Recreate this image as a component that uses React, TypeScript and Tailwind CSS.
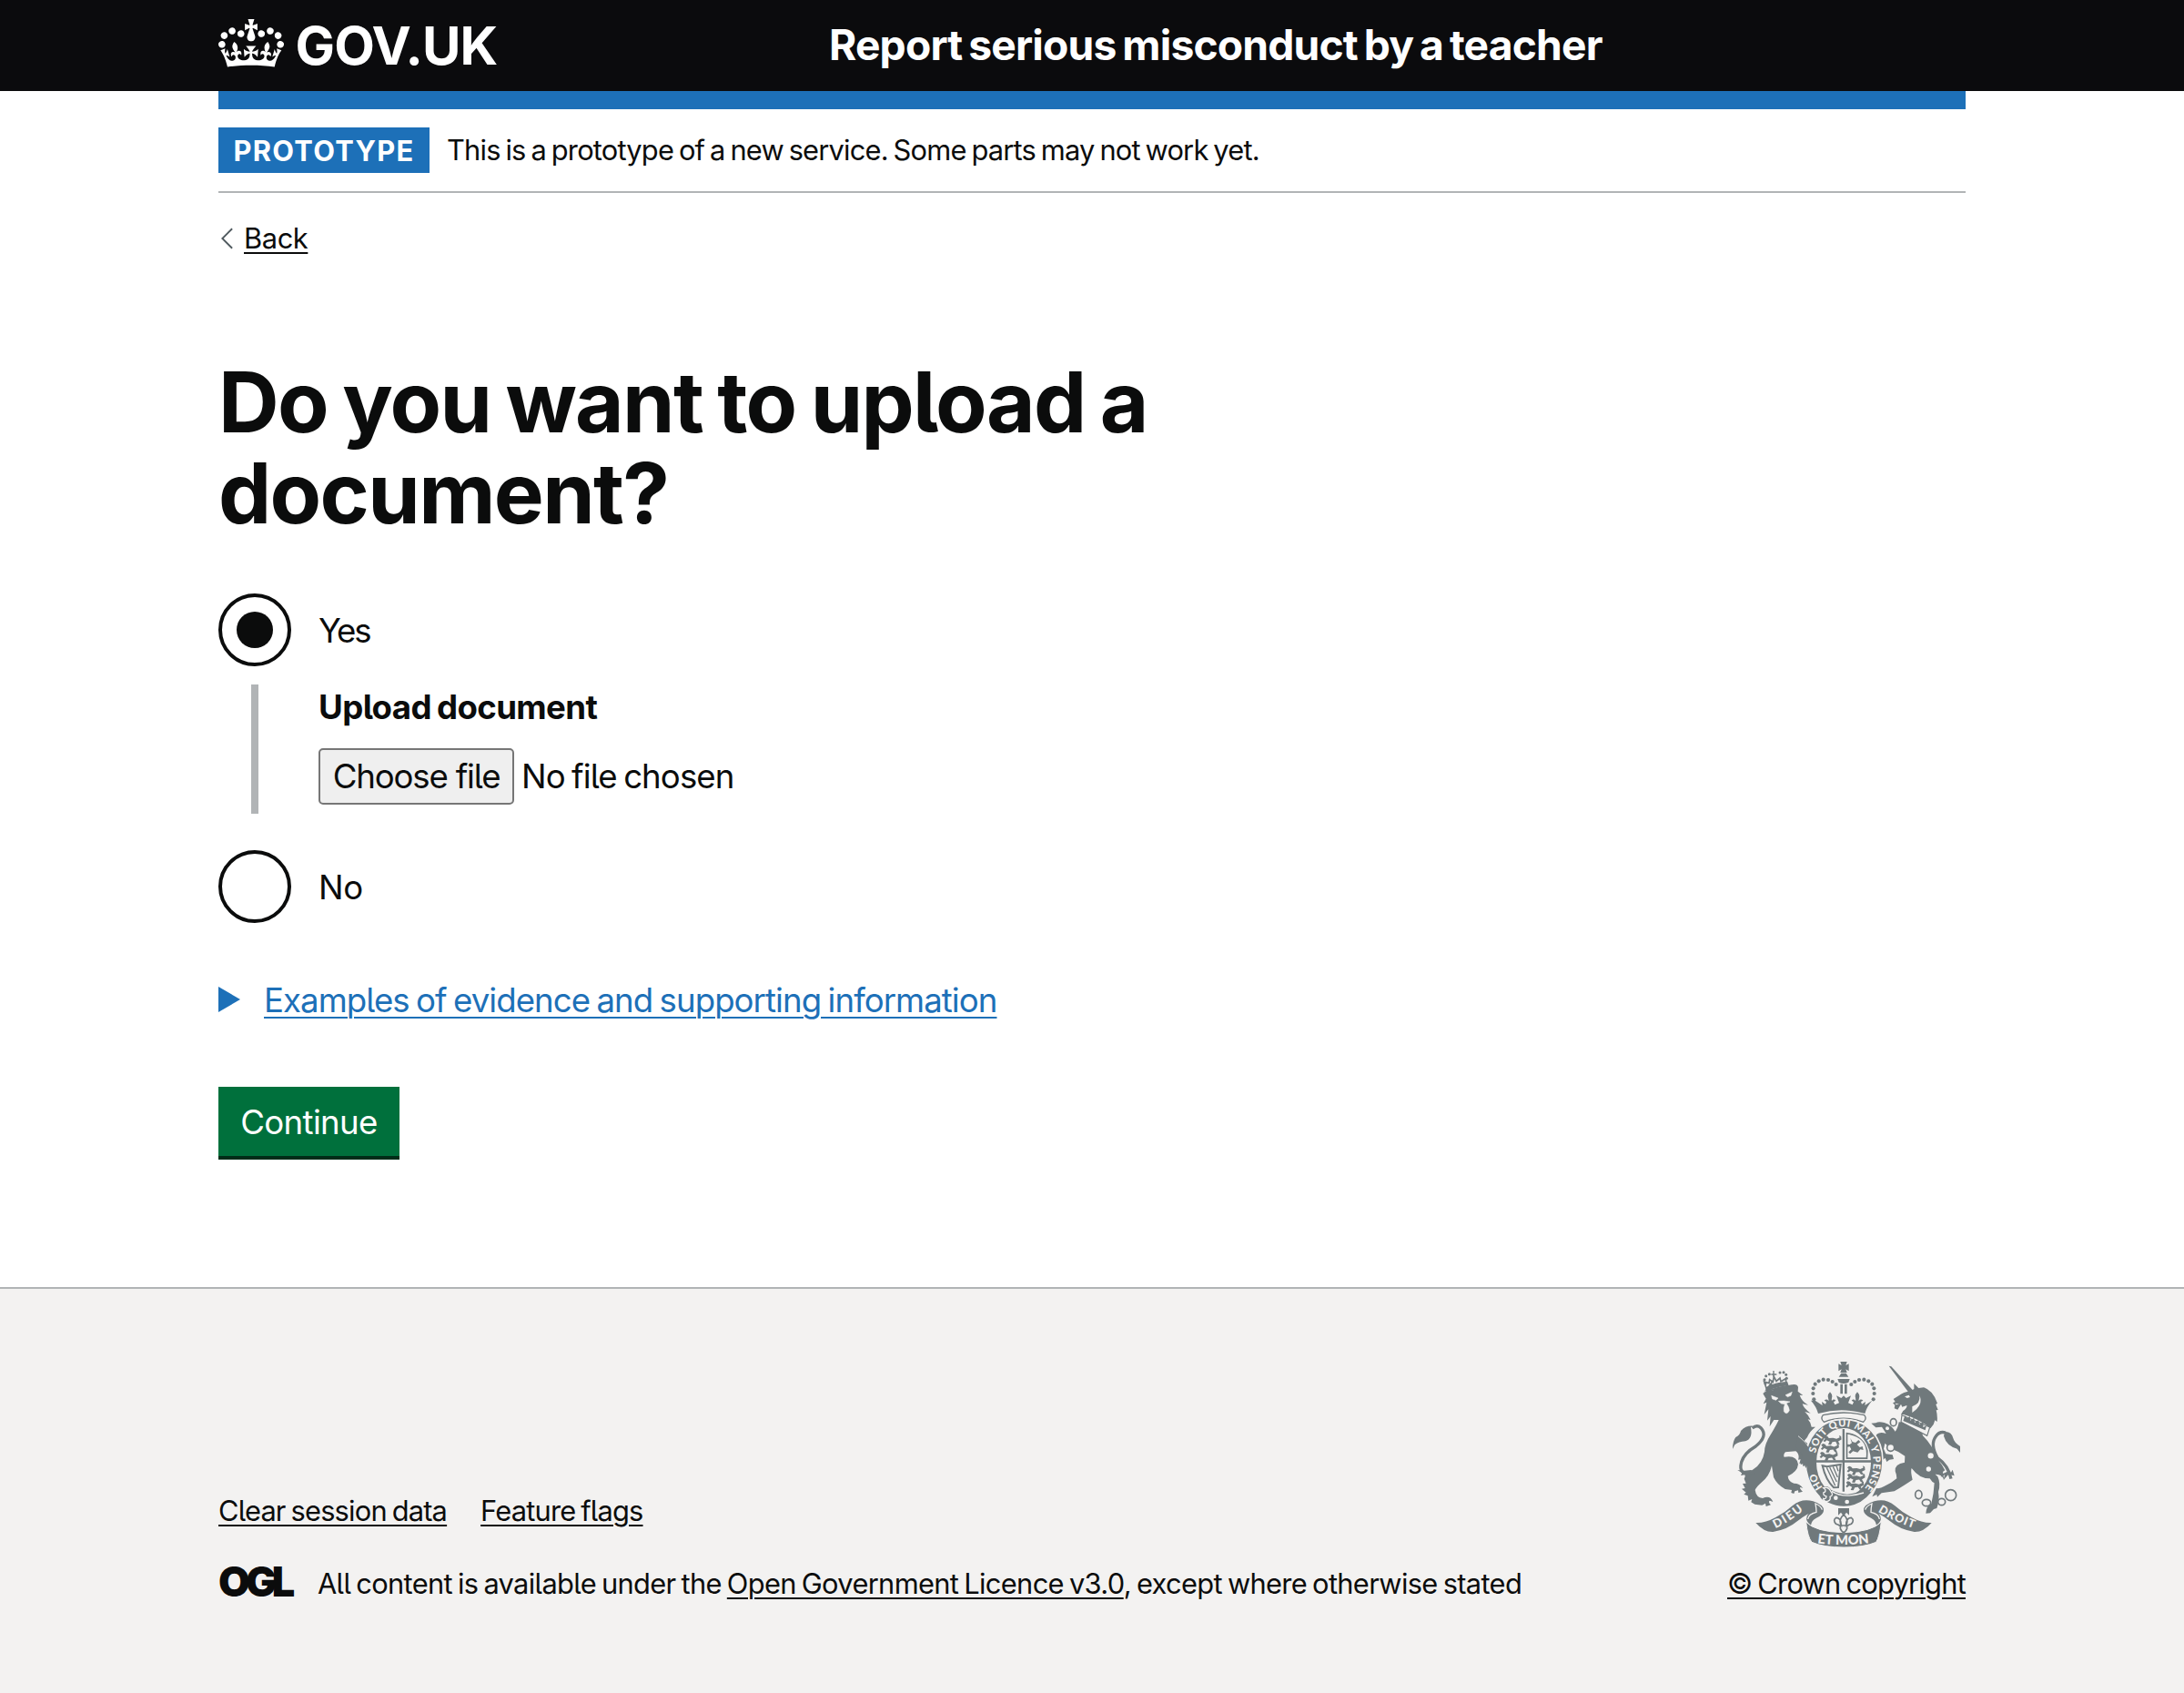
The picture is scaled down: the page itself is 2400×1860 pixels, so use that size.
import type { ReactNode } from 'react';

function Crown() {
  return (
    <svg viewBox="0 0 132 97" className="h-[53px] w-[72px] fill-white" aria-hidden="true">
      <path
        fillRule="evenodd"
        d="M25 30.2c3.5 1.5 7.7-.2 9.1-3.7 1.5-3.6-.2-7.8-3.9-9.2-3.6-1.4-7.6.3-9.1 3.9-1.4 3.5.3 7.5 3.9 9zM9 39.5c3.6 1.5 7.8-.2 9.2-3.7 1.5-3.6-.2-7.8-3.9-9.1-3.6-1.5-7.6.2-9.1 3.8-1.4 3.5.3 7.5 3.8 9zM4.4 57.2c3.5 1.5 7.7-.2 9.1-3.8 1.5-3.6-.2-7.7-3.9-9.1-3.5-1.5-7.6.3-9.1 3.8-1.4 3.5.3 7.6 3.9 9.1zm38.3-21.4c3.5 1.5 7.7-.2 9.1-3.8 1.5-3.6-.2-7.7-3.9-9.1-3.6-1.5-7.6.3-9.1 3.8-1.3 3.6.4 7.7 3.9 9.1zm64.4-5.6c-3.6 1.5-7.8-.2-9.1-3.7-1.5-3.6.2-7.8 3.8-9.2 3.6-1.4 7.7.3 9.2 3.9 1.3 3.5-.4 7.5-3.9 9zm15.9 9.3c-3.6 1.5-7.7-.2-9.1-3.7-1.5-3.6.2-7.8 3.7-9.1 3.6-1.5 7.7.2 9.2 3.8 1.5 3.5-.3 7.5-3.8 9zm4.7 17.7c-3.6 1.5-7.8-.2-9.2-3.8-1.5-3.6.2-7.7 3.9-9.1 3.6-1.5 7.7.3 9.2 3.8 1.3 3.5-.4 7.6-3.9 9.1zM89.3 35.8c-3.6 1.5-7.8-.2-9.2-3.8-1.4-3.6.2-7.7 3.9-9.1 3.6-1.5 7.7.3 9.2 3.8 1.4 3.6-.3 7.7-3.9 9.1zM69.7 17.7l8.9 4.7V9.3l-8.9 2.8c-.2-.3-.5-.6-.9-.9L72.4 0H59.6l3.5 11.2c-.3.3-.6.5-.9.9l-8.8-2.8v13.1l8.8-4.7c.3.3.6.7.9.9l-5 15.4v.1c-.2.8-.4 1.6-.4 2.4 0 4.1 3.1 7.5 7 8.1h.2c.3 0 .7.1 1 .1.4 0 .7 0 1-.1h.2c4-.6 7.1-4.1 7.1-8.1 0-.8-.1-1.7-.4-2.4V34l-5.1-15.4c.4-.2.7-.6 1-.9zM66 92.8c16.9 0 32.8 1.1 47.1 3.2 4-16.9 8.9-26.7 14-33.5l-9.6-3.4c1 4.9 1.1 7.2 0 10.2-1.5-1.4-3-4.3-4.2-8.7L108.6 76c2.8-2 5-3.2 7.5-3.3-4.4 9.4-10 11.9-13.6 11.2-4.3-.8-6.3-4.6-5.6-7.9 1-4.7 5.7-5.9 8-.5 4.3-8.7-3-11.4-7.6-8.8 7.1-7.2 7.9-13.5 2.1-21.1-8 6.1-8.1 12.3-4.5 20.8-4.7-5.4-12.1-2.5-9.5 6.2 3.4-5.2 7.9-2 7.2 3.1-.6 4.3-6.4 7.8-13.5 7.2-10.3-.9-10.9-8-11.2-13.8 2.5-.5 7.1 1.8 11 7.3L80.2 60c-4.1 4.4-8 5.3-12.3 5.4 1.4-4.4 8-11.6 8-11.6H55.5s6.4 7.2 7.9 11.6c-4.2-.1-8-1-12.3-5.4l1.4 16.4c3.9-5.5 8.5-7.7 10.9-7.3-.3 5.8-.9 12.8-11.1 13.8-7.2.6-12.9-2.9-13.5-7.2-.7-5 3.8-8.3 7.1-3.1 2.7-8.7-4.6-11.6-9.4-6.2 3.7-8.5 3.6-14.7-4.6-20.8-5.8 7.6-5 13.9 2.2 21.1-4.7-2.6-11.9.1-7.7 8.8 2.3-5.5 7.1-4.2 8.1.5.7 3.3-1.3 7.1-5.7 7.9-3.5.7-9-1.8-13.5-11.2 2.5.1 4.7 1.3 7.5 3.3l-4.7-15.4c-1.2 4.4-2.7 7.2-4.3 8.7-1.1-3-.9-5.3 0-10.2l-9.5 3.4c5 6.9 9.9 16.7 14 33.5 14.8-2.1 30.8-3.2 47.7-3.2z"
      />
    </svg>
  );
}

const crownPearls = [
  [310, 172], [307, 153], [308, 136], [314, 122], [326, 112], [341, 107], [357, 108], [371, 114], [383, 123],
  [506, 172], [509, 153], [508, 136], [502, 122], [490, 112], [475, 107], [459, 108], [445, 114], [433, 123],
];

const lionCrownPearls = [
  [150, 120], [147, 107], [152, 95], [163, 89], [198, 84], [210, 83], [218, 91], [220, 103],
];

/* A small lion passant, repeated on the English quarters of the shield. */
function Passant({ x, y }: { x: number; y: number }) {
  return (
    <path
      transform={`translate(${x} ${y}) scale(1.15)`}
      d="M0 4 5 0l6 2 4 5 12-1 10 3 9-4-2-6 6 3 1 9-9 5 4 9-7-1-5-7-9 1-4 8-8-1 4-8-8-4-6 5-4-3 5-6z"
    />
  );
}

const ribbon =
  'M118 579Q150 580 184 561Q215 545 240 522Q270 497 307 508Q345 520 342 540Q340 553 318 563Q302 571 300 587Q281 574 287 557Q292 545 313 541Q288 548 255 574Q222 602 175 609Q145 610 118 579z';
const ribbonFold = 'M337 536q-3-12-22-20 3 16 3 28-26 6-28 23';

function RoyalArms({ className }: { className: string }) {
  return (
    <svg
      viewBox="42 48 750 612"
      className={`fill-[#70797c] stroke-none tracking-normal [word-spacing:0px] ${className}`}
      aria-hidden="true"
    >
      {/* central crown */}
      <path d="M397 48h22l-4 12 10-5v24l-10-6 4 11h-22l4-11-10 6V55l10 5zM392 98l8-12h16l8 12zM388 105h40l-4 11q-16 8-32 0zM397 122h8v32h-8zM411 122h8v32h-8z" />
      {crownPearls.map(([x, y]) => (
        <circle key={`${x}-${y}`} cx={x} cy={y} r="6.2" />
      ))}
      <path d="M314 176l24 16-2-12 12 8 3-8-7-4q8-7 14 1l5-26 6 26q6-8 13-1l-7 5 4 9 14-6-9-24 16 8 8-8 8 8 16-8-9 24 14 6 4-9-7-5q7-7 13 1l6-26 5 26q6-8 14-1l-7 4 3 8 12-8-2 12 24-16q-18 20-24 43-77-22-154 0-6-23-24-43z" />
      <path d="M363 148q14 14 0 31-14-17 0-31zM453 148q14 14 0 31-14-17 0-31z" />
      <path d="M340 224Q408 208 476 224Q486 236 473 247Q408 222 343 247Q330 236 340 224z" fill="#f3f2f1" stroke="#70797c" strokeWidth="4" />

      {/* lion */}
      <path d="M152 132l-6-18 16 5 2-12 11 8 3-18 8 15 12-10 3 11 16-9 3 26q-34 2-64 18z" fill="none" stroke="#70797c" strokeWidth="5" />
      <path d="M155 133q31-16 66-17l3 9q-35 2-66 18zM169 90h18M177 78v20" stroke="#70797c" strokeWidth="4" />
      {lionCrownPearls.map(([x, y]) => (
        <circle key={`${x}-${y}`} cx={x} cy={y} r="4.5" />
      ))}
      <path d="M142 153q8-14 22-10 36-15 73-19 18-4 21 8l-1 14 17 13-11-1q6 20 28 33l-19-4q4 15 27 31l-19-5q13 12 19 27l-9-2q9 9 12 25l13 0q-20 15-27 34l-10 12q28 18 33 55l16 20-15 10-12-8 4 12-11-6-2 12-10-13-8 1 1-10-12 2 4-14-8 1q6-17-8-28l-34 3q-8 8-4 16 42-8 46 24-2 24-34 39 2 18 20 24 19 0 30 16l-8-3q-6 2 7 14l-14 4-1-8-11 3-3 8-9-3 2-9-22-3q-26-14-38-39l-6-38q-8 36-35 56-16 14-20 24 4 26 25 27 25-12 34 12l-10-4q-8 3 3 14l-16 5-2-10-11 6-24-3-12-7 3-10-12 5-2-16-13-5 7-6-14-12 11-2-8-15 11-1-6-15 6-15 24-16q31-20 37-58 0-25 20-56 22-36 32-60l-9-2 7-28-10 5 4-30-14 18q-1-25 7-38l-14 14q0-21 10-33l-10 7q0-22 8-40z" />
      <path d="M142 153L152 170L143 187L154 182L146 222L160 205L156 242L167 228L164 262L178 240L230 240L230 135L152 145z" />
      <path d="M170 160l22 8-7 7-12-4zM216 158l22-10-4 12-11 4zM193 178l18-1 20 3-12 5q10 14 10 24-9 17-18 3-2-12 3-24l-12-2zM258 293q28 20 42 54l-8-19-16-18z" fill="#f3f2f1" stroke="#f3f2f1" strokeWidth="1.5" />
      <path d="M100 417q-40 2-29-38 9-30 47-52 42-34 17-61-13-12-28 1" fill="none" stroke="#70797c" strokeWidth="10" />
      <path d="M109 260q-23-2-40 16-3 15-17 21-10 13-10 39l7-14q12-10 35-12 25-7 18-45zM103 405l14 13-18 2-14 11-3-10-13 2 4-8-15-10 23 2z" />

      {/* unicorn */}
      <path d="M557 62L565 64L637 143L622 149Z" />
      <path d="M640 120L655 135L672 133Q702 142 717 185L712 189L719 207L713 208Q718 225 716 246L709 241L704 255L694 268Q660 238 606 222L597 222L604 210Q618 200 616 192L601 197L597 188L586 206L575 202L577 191L570 184L578 180L572 171L590 160Q605 148 628 145L640 138Z" />
      <path d="M609 163l14-5 4 7-10 3zM578 185l13 3-10 2zM634 196Q662 186 658 160Q672 190 634 216z" fill="#f3f2f1" />
      <path d="M590 247q-3 20-12 31-12-21-36-29-19-5-28 1l-15 1 15 14 20-2 14 22q-32-10-37 16l3 20-8 9 6 6-5 9 20 22 10 5 8-7 5 13 9-7 14-2-4-14-22-3-7-17 4-18q18 18 44 28l22 14-1 21q-34 5-31 29 5 12 5 24-18 16-42 26-12 8-25 6l-14 28 15-7 2 8 14-13 42-6q35-21 60-38-7-28-3-38 26 35 60 34 7 12 15 15-2 38-10 68-16 6-18 32l14-1 12-13 10-3q10-27 5-54 9-26-2-50l-8-8q22-1 29 18l-4-26 7-5q-10-21-23-35-17-46-50-79l-8-35z" />
      <path d="M600 224l92 40-9 28-86-45z" fill="#f3f2f1" stroke="#70797c" strokeWidth="3.5" />
      <path d="M604 243l6-17 8 9 8-8 2 15 12-9 2 16 13-9 2 15 14-9-1 18 11-5-4 15z" />
      <path d="M762 434q-9-44-45-69-25-45-5-71 12-18 32-12" fill="none" stroke="#70797c" strokeWidth="10" />
      <path d="M741 279q22-2 28 21 3 14 23 27v21l-10-13q-35-10-44-42zM731 419l19-9 12 3 5-9 6 20-19-5-17 19 4-17-13 7z" />
      <g fill="#f3f2f1" stroke="#70797c" strokeWidth="5">
        <ellipse cx="572" cy="248" rx="10" ry="12" />
        <circle cx="563" cy="331" r="12" />
        <circle cx="695" cy="358" r="12" />
        <ellipse cx="655" cy="486" rx="11" ry="14" />
        <ellipse cx="681" cy="513" rx="14" ry="11" />
        <ellipse cx="731" cy="510" rx="12" ry="11" />
        <circle cx="761" cy="488" r="18" />
      </g>
      <g fill="#f3f2f1">
        <circle cx="688" cy="402" r="8" />
        <circle cx="664" cy="438" r="8" />
        <circle cx="552" cy="268" r="6" />
      </g>

      {/* garter */}
      <path d="M408 238c75 0 129 59 129 137s-54 152-129 152-126-74-126-152 51-137 126-137z" stroke="#f3f2f1" strokeWidth="5" />
      <ellipse cx="408" cy="380" rx="90" ry="113" fill="#f3f2f1" />
      <path d="M404 270h7v206h-7zM318 373h180v7H318z" />
      <Passant x={342} y={292} />
      <Passant x={334} y={318} />
      <Passant x={330} y={345} />
      <Passant x={420} y={392} />
      <Passant x={420} y={417} />
      <Passant x={416} y={442} />
      <path d="M416 281q58 8 72 60l-1 28h-71zm5 6v77h61q8-66-61-77z" fillRule="evenodd" />
      <path d="M430 300l7 12 10 3 10-9 6 7-11 8 9 9 9-3 3 12-10-2-9 10-15-4-10 9-5-6 9-9-5-9-9 1v-9l9 1 7-5z" />
      <path d="M338 391l15 3 45-7-8 75-15 1q-26-25-37-72z" fill="none" stroke="#70797c" strokeWidth="6" />
      <path d="M352 397l28 60M362 396l23 48M373 394l15 35M384 391l6 18" stroke="#70797c" strokeWidth="4" />
      <path d="M334 465q21-14 33 6 42 19 68 12l36-8-26 39q-58 12-104-9-20-13-7-40z" />
      <path d="M369 475q40 26 105 5M341 464q17-5 24 11 12 13-2 18 4 14-13 16-9-2-9-10 9 3 10-7-12-3-9-13 8-1 5-10z" fill="none" stroke="#f3f2f1" strokeWidth="4" />
      <circle cx="382" cy="497" r="7" fill="#f3f2f1" />
      <circle cx="419" cy="510" r="7" fill="#f3f2f1" />

      {/* lion's forepaw */}
      <path d="M255 293q32 23 45 51 3 21 18 39l-5 17-12-13-3 15-9-14-6 11-5-15-12 3 7-32-22-25z" />

      {/* scrolls */}
      <path d={ribbon} />
      <path d={ribbon} transform="translate(816 0) scale(-1 1)" />
      <g fill="none" stroke="#f3f2f1" strokeWidth="4">
        <path d={ribbonFold} />
        <path d={ribbonFold} transform="translate(816 0) scale(-1 1)" />
      </g>
      <path d="M284 576q30 33 124 35 94-2 124-35-6 50-17 67-40 17-107 17t-105-17q-14-17-19-67z" stroke="#f3f2f1" strokeWidth="3" />

      {/* fleur-de-lis pendant */}
      <path d="M390 531h36v23l-9-9-9 12-9-12-9 9z" />
      <path d="M408 552q18 18 8 34 1-24 17-24 12 8 0 21l-14 5v10q-11 24-22 0v-10l-14-5q-12-13 0-21 16 0 17 24-10-16 8-34zM391 588h34" fill="none" stroke="#70797c" strokeWidth="5" />

      {/* mottoes */}
      <defs>
        <path id="garterText" d="M345 470A97 119 0 1 1 473 470" />
        <path id="dieu" d="M181 598Q228 577 283 532" />
        <path id="mon" d="M318 645Q408 658 500 644" />
        <path id="droit" d="M519 541Q570 574 650 601" />
      </defs>
      <g fill="#f3f2f1" fontFamily="Lato" fontWeight="900">
        <text fontSize="33"><textPath href="#garterText" startOffset="10">HO</textPath></text>
        <text fontSize="33" textLength="400"><textPath href="#garterText" startOffset="128">SOIT QUI MAL Y PENSE</textPath></text>
        <text fontSize="39" textLength="110"><textPath href="#dieu" startOffset="2">DIEU</textPath></text>
        <text fontSize="44" textLength="172"><textPath href="#mon" startOffset="3">ET MON</textPath></text>
        <text fontSize="38" textLength="130"><textPath href="#droit" startOffset="2">DROIT</textPath></text>
      </g>
    </svg>
  );
}

function Link({ children, className = '' }: { children: ReactNode; className?: string }) {
  return (
    <a href="#" className={`underline decoration-2 underline-offset-[4px] ${className}`}>
      {children}
    </a>
  );
}

export default function App() {
  return (
    <div className="flex min-h-[1860px] flex-col bg-white font-['Inter','Liberation_Sans',sans-serif] tracking-[-0.8px] text-[#0b0c0c] [font-feature-settings:'cv05'] [word-spacing:-2px]">
      <header className="h-[100px] bg-[#0b0b0d] px-[240px] text-white">
        <div className="flex h-full items-center">
          <a href="#" className="flex w-[671px] items-center pb-[5px]">
            <Crown />
            <span className="ml-[12.5px] pt-[4px] text-[58px] leading-[56px] font-bold tracking-[-0.9px]">GOV.UK</span>
          </a>
          <span className="text-[46.2px] font-bold tracking-[-0.83px] [word-spacing:-3.2px]">
            Report serious misconduct by a teacher
          </span>
        </div>
      </header>

      <div className="mx-[240px] h-[20px] bg-[#1d70b8]" />

      <div className="mx-[240px] flex items-center border-b-2 border-[#b1b4b6] py-[20px]">
        <strong className="flex h-[50px] w-[232px] items-center justify-center bg-[#1d70b8] pt-[2px] text-[30.8px] font-bold tracking-[1.3px] text-white">
          PROTOTYPE
        </strong>
        <span className="ml-[19px] text-[30.8px] leading-[40px]">
          This is a prototype of a new service. Some parts may not work yet.
        </span>
      </div>

      <main className="mx-[240px]">
        <a href="#" className="mt-[30px] flex items-center text-[30.8px] leading-[40px] tracking-[-0.4px]">
          <svg viewBox="0 0 16 26" className="mr-[11px] ml-[2px] h-[26px] w-[15px]" aria-hidden="true">
            <path d="M14 1.5 2.5 13 14 24.5" className="fill-none stroke-[#505a5f] stroke-2" />
          </svg>
          <span className="underline decoration-2 underline-offset-[4px]">Back</span>
        </a>

        <h1 className="mt-[109px] w-[1270px] text-[92.4px] leading-[100px] font-bold tracking-[-1.66px] [word-spacing:-4.1px]">
          Do you want to upload a
          <br />
          document?
        </h1>

        <div className="mt-[61px] text-[36.6px] leading-[50px] tracking-[-0.9px]">
          <div className="flex items-center">
            <span className="flex size-[80px] items-center justify-center rounded-full border-4 border-[#0b0c0c]">
              <span className="size-[40px] rounded-full bg-[#0b0c0c]" />
            </span>
            <span className="ml-[30px] pt-[2px] tracking-[-2px]">Yes</span>
          </div>

          <div className="mt-[20px] ml-[36px] h-[142px] border-l-8 border-[#b1b4b6] pl-[66px]">
            <label className="block font-bold tracking-[-0.6px]">Upload document</label>
            <div className="mt-[20px] flex items-center">
              <button className="flex h-[62px] w-[215px] items-center justify-center rounded-[5px] border-2 border-[#767676] bg-[#efefef] tracking-[-1.15px]">
                Choose file
              </button>
              <span className="ml-[8px]">No file chosen</span>
            </div>
          </div>

          <div className="mt-[40px] flex items-center">
            <span className="size-[80px] rounded-full border-4 border-[#0b0c0c]" />
            <span className="ml-[30px] pt-[2px] tracking-[-0.4px]">No</span>
          </div>
        </div>

        <div className="mt-[60px] flex items-center text-[36.6px] leading-[50px] tracking-[-0.93px] text-[#1d70b8]">
          <svg viewBox="0 0 24 28" className="mb-[2px] h-[28px] w-[24px] fill-[#1d70b8]" aria-hidden="true">
            <path d="M0 0 24 14 0 28z" />
          </svg>
          <span className="ml-[26px] underline decoration-2 underline-offset-[5px]">
            Examples of evidence and supporting information
          </span>
        </div>

        <button className="mt-[70px] flex h-[76px] w-[199px] items-center justify-center bg-[#00703c] pt-[2px] text-[36.6px] tracking-[-0.65px] text-white shadow-[0_4px_0_#002d18]">
          Continue
        </button>
      </main>

      <footer className="mt-[144px] flex flex-1 justify-between border-t-2 border-[#b1b4b6] bg-[#f3f2f1] px-[240px] text-[30.8px] leading-[40px]">
        <div className="pt-[224px]">
          <div className="flex gap-[37px]">
            <Link>Clear session data</Link>
            <Link>Feature flags</Link>
          </div>
          <div className="mt-[40px] flex items-center">
            <span className="w-[109px] pb-[5px] text-[45px] leading-[35px] font-black tracking-[-5px]">OGL</span>
            <span className="tracking-[-0.65px]">
              All content is available under the <Link>Open Government Licence v3.0</Link>, except where otherwise
              stated
            </span>
          </div>
        </div>
        <div className="flex flex-col items-end pt-[80px]">
          <RoyalArms className="mr-[6px] h-[204px] w-[250px]" />
          <Link className="mt-[20px] tracking-[-0.75px]">© Crown copyright</Link>
        </div>
      </footer>
    </div>
  );
}
